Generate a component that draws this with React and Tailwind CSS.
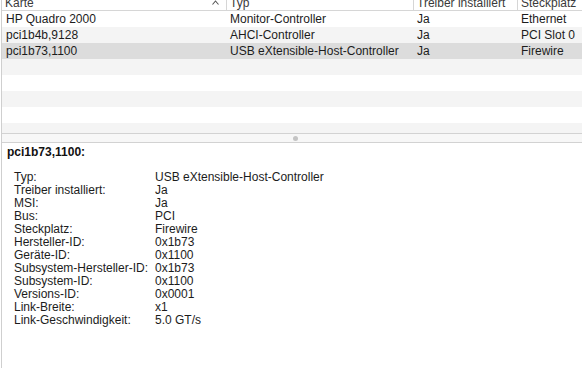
import React from "react";

const rows = [
  { karte: "HP Quadro 2000", typ: "Monitor-Controller", treiber: "Ja", slot: "Ethernet" },
  { karte: "pci1b4b,9128", typ: "AHCI-Controller", treiber: "Ja", slot: "PCI Slot 0" },
  { karte: "pci1b73,1100", typ: "USB eXtensible-Host-Controller", treiber: "Ja", slot: "Firewire" },
];

const details = [
  ["Typ:", "USB eXtensible-Host-Controller"],
  ["Treiber installiert:", "Ja"],
  ["MSI:", "Ja"],
  ["Bus:", "PCI"],
  ["Steckplatz:", "Firewire"],
  ["Hersteller-ID:", "0x1b73"],
  ["Geräte-ID:", "0x1100"],
  ["Subsystem-Hersteller-ID:", "0x1b73"],
  ["Subsystem-ID:", "0x1100"],
  ["Versions-ID:", "0x0001"],
  ["Link-Breite:", "x1"],
  ["Link-Geschwindigkeit:", "5.0 GT/s"],
];

const cols = "grid grid-cols-[224px_187px_104px_1fr]";

const Row = ({ row, idx }) => {
  const bg = idx === 2 ? "bg-[#dcdcdc]" : idx % 2 === 1 ? "bg-[#f4f4f4]" : "bg-white";
  return (
    <div className={`${cols} h-[16px] leading-[16px] ${bg}`}>
      <div className="pl-[4px] whitespace-nowrap overflow-hidden">{row?.karte}</div>
      <div className="pl-[4px] whitespace-nowrap overflow-hidden">{row?.typ}</div>
      <div className="pl-[4px] whitespace-nowrap overflow-hidden">{row?.treiber}</div>
      <div className="pl-[4px] whitespace-nowrap overflow-hidden">{row?.slot}</div>
    </div>
  );
};

export default function App() {
  return (
    <div
      className="w-[582px] h-[368px] bg-white overflow-hidden flex flex-col text-[12px] text-[#1c1c1c]"
      style={{ fontFamily: '"Liberation Sans", Arial, sans-serif' }}
    >
      <div className="ml-[1px] border-l border-[#cfcfcf] flex flex-col flex-1 min-h-0">
        {/* table header, scrolled so only the bottom shows */}
        <div className="h-[11px] overflow-hidden border-b border-[#d6d6d6] bg-white">
          <div className={`${cols} mt-[-5px] leading-[16px] text-[#3a3a3a]`}>
            <div className="pl-[3px] relative">
              Karte
              <svg
                className="absolute right-[7px] top-[5px]"
                width="7"
                height="5"
                viewBox="0 0 7 5"
              >
                <path d="M0.5 4.5 L3.5 1 L6.5 4.5" fill="none" stroke="#555" strokeWidth="1.1" />
              </svg>
            </div>
            <div className="pl-[3px] border-l border-[#d6d6d6]">Typ</div>
            <div className="pl-[3px] border-l border-[#d6d6d6]">Treiber installiert</div>
            <div className="pl-[3px] border-l border-[#d6d6d6]">Steckplatz</div>
          </div>
        </div>

        <div className="h-[122px] overflow-hidden">
          {[0, 1, 2, 3, 4, 5, 6, 7].map((i) => (
            <Row key={i} row={rows[i]} idx={i} />
          ))}
        </div>

        {/* split view divider */}
        <div className="h-[10px] border-y border-[#d2d2d2] bg-[#f7f7f7] flex items-center justify-center">
          <div className="w-[5px] h-[5px] rounded-full bg-[#c4c4c4] ml-[6px]" />
        </div>

        <div className="flex-1 pl-[5px] pt-[1px]">
          <div className="font-bold leading-[16px] text-[#111]">pci1b73,1100:</div>
          <div className="mt-[11px] pl-[7px]">
            {details.map(([k, v]) => (
              <div key={k} className="grid grid-cols-[141px_1fr] leading-[13px] h-[13px]">
                <span>{k}</span>
                <span>{v}</span>
              </div>
            ))}
          </div>
        </div>
      </div>
    </div>
  );
}
